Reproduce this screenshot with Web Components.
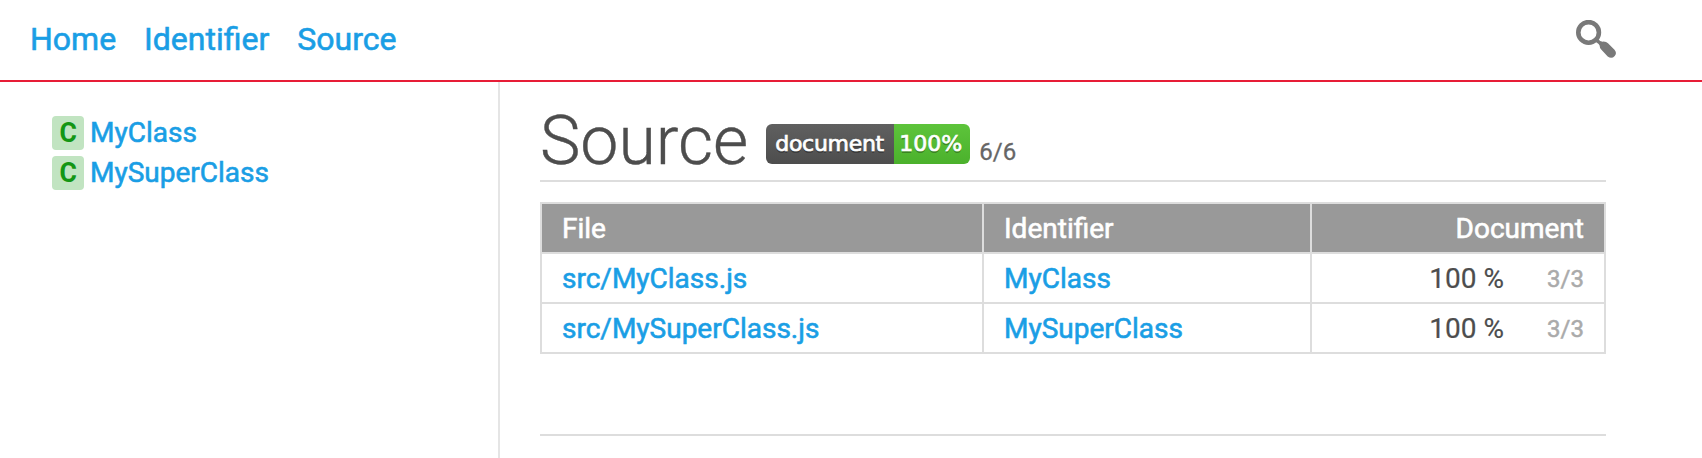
<!DOCTYPE html>
<html lang="en"><head><meta charset="utf-8"><title>Source</title>
<style>
html,body{margin:0;height:100%;overflow:hidden}
body{background:#fff;color:#4d4d4d;font:28px/1.4 Roboto,"Liberation Sans",sans-serif}
</style></head><body>
<doc-page>
  <doc-nav slot="nav"><doc-link>Home</doc-link><doc-link>Identifier</doc-link><doc-link>Source</doc-link></doc-nav>
  <doc-side-item slot="side">MyClass</doc-side-item>
  <doc-side-item slot="side">MySuperClass</doc-side-item>
  <doc-title>Source<doc-badge slot="badge" label="document" value="100%"></doc-badge><span slot="count">6/6</span></doc-title>
  <source-table></source-table>
</doc-page>
<script>
function define(name, html){
  const t=document.createElement('template'); t.innerHTML=html;
  customElements.define(name, class extends HTMLElement{
    constructor(){super();this.attachShadow({mode:'open'}).append(t.content.cloneNode(true));}
    connectedCallback(){
      for(const a of this.attributes){const n=this.shadowRoot.querySelector('[data-attr="'+a.name+'"]'); if(n) n.textContent=a.value;}
    }
  });
}
define('doc-link',`<style>:host{display:inline-block}a{color:#1a9ee5;text-decoration:none;-webkit-text-stroke:.6px currentColor}</style><a><slot></slot></a>`);
define('doc-search',`<style>:host{display:block;width:40px;height:38px}svg{display:block}</style>
<svg width="40" height="38" viewBox="0 0 40 38"><circle cx="12.6" cy="12.4" r="10.3" fill="none" stroke="#797979" stroke-width="4.6"/>
<path d="M19.200 21.500L22 18.800Q23.800 22 27.500 21.600Q30.300 21.600 32 23.300L38.500 29.800Q41.300 33 38.700 36Q35.500 39.500 31.700 36.400L25.200 29.500Q23.600 27.800 23.600 25.600Q22.800 23.700 19.200 21.500Z" fill="#797979"/></svg>`);
define('doc-nav',`<style>:host{display:flex;box-sizing:border-box;height:82px;border-bottom:2px solid #e71d36;padding:0 86px 2px 30px;align-items:center;gap:28px;font-size:32px}doc-search{margin-left:auto}</style><slot></slot><doc-search></doc-search>`);
define('doc-side-item',`<style>:host{display:flex;height:40px;align-items:center}i{font:700 28px/33px Roboto,sans-serif;width:32px;height:34px;text-align:center;margin:2px 6px 0 0;border-radius:4px;background:#c1e4c1;color:#149614}i span{display:inline-block;transform:scaleX(.95)}doc-link{padding-top:2px}</style><i><span>C</span></i><doc-link><slot></slot></doc-link>`);
define('doc-badge',`<style>:host{display:flex;height:40px;border-radius:6px;overflow:hidden;font:22px/39px "DejaVu Sans",sans-serif;color:#fff;text-shadow:0 2px 0 rgba(1,1,1,.3);-webkit-text-stroke:.7px #fff}
b{font-weight:400;box-sizing:border-box;white-space:nowrap}
.l{width:128px;padding-left:9px;letter-spacing:-.3px;background:linear-gradient(#606060,#4d4d4d)}.v{width:76px;padding-left:5px;letter-spacing:0;background:linear-gradient(#5dc43b,#4bb12c)}</style><b class="l" data-attr="label"></b><b class="v" data-attr="value"></b>`);
define('doc-title',`<style>:host{display:flex;box-sizing:border-box;height:100px;border-bottom:2px solid #ddd;align-items:flex-start}
h1{margin:22px 18px 0 0;font-size:68px;line-height:74px;font-weight:300;white-space:nowrap;-webkit-text-stroke:.4px currentColor}
slot[name=badge]{display:block;margin-top:42px}
small{font-size:24px;line-height:30px;margin:55px 0 0 9px;color:#666;-webkit-text-stroke:.3px currentColor}</style><h1><slot></slot></h1><slot name="badge"></slot><small><slot name="count"></slot></small>`);
define('source-table',`<style>:host{display:block;margin-top:20px}
.g{display:grid;grid-template-columns:440px 326px 292px;grid-auto-rows:48px;gap:2px;padding:2px;background:#ddd;line-height:50px}
.g>*{background:#fff;padding:0 20px;height:48px}.g>.h{background:#999;color:#fff;-webkit-text-stroke:.6px currentColor}
.r{display:flex;justify-content:flex-end;white-space:pre;-webkit-text-stroke:.2px currentColor}small{font-size:24px;color:#aaa;width:37px;margin-left:43px;text-align:right;line-height:51px;-webkit-text-stroke:.5px currentColor}</style>
<div class="g"><div class="h">File</div><div class="h">Identifier</div><div class="h r">Document</div>
<doc-link>src/MyClass.js</doc-link><doc-link>MyClass</doc-link><div class="r">100 %<small>3/3</small></div>
<doc-link>src/MySuperClass.js</doc-link><doc-link>MySuperClass</doc-link><div class="r">100 %<small>3/3</small></div></div>`);
define('doc-page',`<style>:host{display:flex;flex-direction:column;height:100vh}
.b{display:flex;flex:1;min-height:0}aside{box-sizing:border-box;width:500px;border-right:2px solid #e5e5e5;padding:30px 0 0 52px}
main{width:1066px;margin-left:40px}footer{height:2px;background:#ddd;margin-top:80px}</style>
<slot name="nav"></slot><div class="b"><aside><slot name="side"></slot></aside><main><slot></slot><footer></footer></main></div>`);
</script></body></html>
